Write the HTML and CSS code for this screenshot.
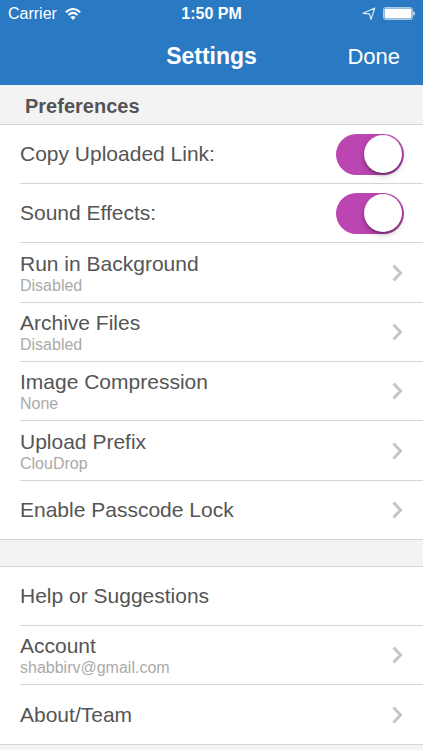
FILE: index.html
```
<!DOCTYPE html>
<html lang="en">
<head>
<meta charset="utf-8">
<meta name="viewport" content="width=device-width, initial-scale=1">
<title>Settings</title>
<link rel="stylesheet" href="styles.css">
</head>
<body>
<svg class="sprite">
  <symbol id="chevron" viewBox="0 0 12 18"><path d="M1.5 1.5 8.5 9 1.5 16.5" fill="none" stroke="#c5c5ca" stroke-width="3"/></symbol>
</svg>
<header class="top">
  <div class="status">
    <div class="carrier">
      <span>Carrier</span>
      <svg class="wifi" width="16" height="12" viewBox="0 0 16 12" fill="none" stroke="#fff" stroke-width="2">
        <path d="M.8 4.2Q8-2.2 15.2 4.2"/>
        <path d="M3.4 7Q8 2.8 12.6 7"/>
        <path d="M8 12 5.4 9.2Q8 7 10.6 9.2Z" fill="#fff" stroke="none"/>
      </svg>
    </div>
    <span class="time">1:50 PM</span>
    <div class="indicators">
      <svg width="14" height="14" viewBox="0 0 14 14" fill="none" stroke="#d8e9f8" stroke-width="1.2" stroke-linejoin="round">
        <path d="M12.8 1 1 6.3 7.4 6.9 9 12.4Z"/>
      </svg>
      <svg width="32" height="14" viewBox="0 0 32 14">
        <rect x=".5" y=".5" width="29" height="12" rx="2" fill="none" stroke="#a9cbea"/>
        <rect x="1.5" y="1.5" width="27" height="10" rx="1" fill="#fff"/>
        <path d="M30.4 4.3Q32 4.8 32 6.5T30.4 8.7Z" fill="#d8e9f8"/>
      </svg>
    </div>
  </div>
  <nav class="bar">
    <h1 class="title">Settings</h1>
    <button class="done" type="button">Done</button>
  </nav>
</header>
<main>
  <h2 class="section">Preferences</h2>
  <ul class="list">
    <li class="row">
      <label class="label" for="copy">Copy Uploaded Link:</label>
      <input class="switch" id="copy" type="checkbox" role="switch" checked>
    </li>
    <li class="row">
      <label class="label" for="sound">Sound Effects:</label>
      <input class="switch" id="sound" type="checkbox" role="switch" checked>
    </li>
    <li class="row"><a class="link" href="#background">
      <span class="text"><span class="label">Run in Background</span><span class="detail">Disabled</span></span>
      <svg class="chevron"><use href="#chevron"/></svg>
    </a></li>
    <li class="row"><a class="link" href="#archive">
      <span class="text"><span class="label">Archive Files</span><span class="detail">Disabled</span></span>
      <svg class="chevron"><use href="#chevron"/></svg>
    </a></li>
    <li class="row"><a class="link" href="#compression">
      <span class="text"><span class="label">Image Compression</span><span class="detail">None</span></span>
      <svg class="chevron"><use href="#chevron"/></svg>
    </a></li>
    <li class="row"><a class="link" href="#prefix">
      <span class="text"><span class="label">Upload Prefix</span><span class="detail">ClouDrop</span></span>
      <svg class="chevron"><use href="#chevron"/></svg>
    </a></li>
    <li class="row"><a class="link" href="#passcode">
      <span class="label">Enable Passcode Lock</span>
      <svg class="chevron"><use href="#chevron"/></svg>
    </a></li>
  </ul>
  <ul class="list more">
    <li class="row"><a class="link" href="#help"><span class="label">Help or Suggestions</span></a></li>
    <li class="row"><a class="link" href="#account">
      <span class="text"><span class="label">Account</span><span class="detail">shabbirv@gmail.com</span></span>
      <svg class="chevron"><use href="#chevron"/></svg>
    </a></li>
    <li class="row"><a class="link" href="#about">
      <span class="label">About/Team</span>
      <svg class="chevron"><use href="#chevron"/></svg>
    </a></li>
  </ul>
</main>
</body>
</html>
```
FILE: styles.css
```
* {
  box-sizing: border-box;
}

body {
  margin: 0;
  background: #f3f3f4;
  color: #555;
  font-family: "Liberation Sans", Arial, sans-serif;
}

.sprite {
  display: none;
}

.top {
  background: #2a79c3;
  color: #fff;
}

.status {
  display: grid;
  grid-template-columns: 1fr auto 1fr;
  align-items: center;
  height: 28px;
  padding: 0 8px;
  font-size: 16px;
}

.carrier {
  display: flex;
  align-items: center;
  gap: 8px;
}

.time {
  font-weight: bold;
}

.indicators {
  display: flex;
  justify-content: flex-end;
  align-items: center;
  gap: 7px;
}

.bar {
  display: grid;
  grid-template-columns: 1fr auto 1fr;
  align-items: center;
  height: 57px;
  padding: 0 23px;
}

.title {
  grid-column: 2;
  margin: 0;
  font-size: 23px;
}

.done {
  justify-self: end;
  padding: 0;
  border: 0;
  background: none;
  color: inherit;
  font-family: inherit;
  font-size: 22px;
}

.section {
  display: flex;
  align-items: center;
  height: 40px;
  margin: 0;
  padding: 3px 25px 0;
  border-bottom: 1px solid #d5d5d8;
  font-size: 20px;
}

.list {
  margin: 0;
  padding: 0;
  list-style: none;
  background: #fff;
  border-bottom: 1px solid #d5d5d8;
}

.more {
  margin-top: 26px;
  border-top: 1px solid #d5d5d8;
}

.row {
  display: flex;
  align-items: center;
  justify-content: space-between;
  height: 59px;
  margin-left: 20px;
  padding-right: 19px;
  border-bottom: 1px solid #d5d5d8;
}

.row:nth-child(3n) {
  height: 60px;
}

.row:last-child {
  height: 58px;
  border-bottom: 0;
}

.more .row:last-child {
  height: 59px;
}

.link {
  display: flex;
  flex: 1;
  align-items: center;
  justify-content: space-between;
  color: inherit;
  text-decoration: none;
}

.text {
  display: flex;
  flex-direction: column;
}

.label {
  font-size: 21px;
  line-height: 26px;
}

.detail {
  color: #aaa;
  font-size: 16px;
  line-height: 18px;
}

.chevron {
  width: 12px;
  height: 18px;
}

.switch {
  appearance: none;
  display: flex;
  width: 68px;
  height: 41px;
  margin: 0;
  padding: 1px 2px;
  border-radius: 21px;
  background: #ccc;
}

.switch::before {
  content: "";
  width: 38px;
  height: 38px;
  border-radius: 50%;
  background: #fff;
  box-shadow: 0 2px 3px rgba(0, 0, 0, 0.35), 0 4px 8px rgba(0, 0, 0, 0.1);
}

.switch:checked {
  justify-content: flex-end;
  background: #bb46b1;
}
```
